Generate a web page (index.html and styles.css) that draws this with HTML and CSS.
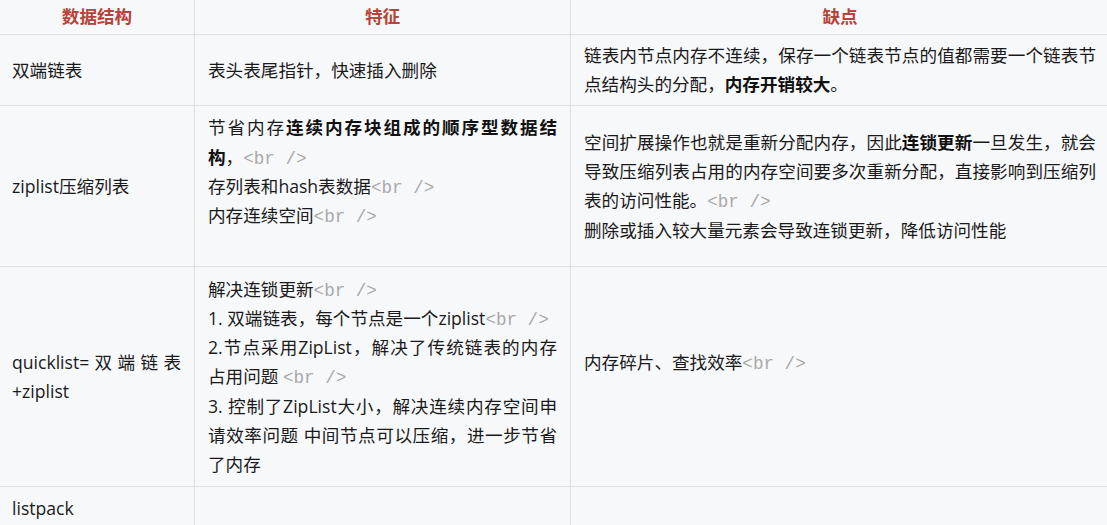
FILE: index.html
```html
<!DOCTYPE html>
<html lang="zh">
<head>
<meta charset="utf-8">
<title>Redis 列表数据结构</title>
<link rel="stylesheet" href="styles.css">
</head>
<body>
<table class="grid">
  <colgroup>
    <col class="c1">
    <col class="c2">
    <col class="c3">
  </colgroup>
  <thead>
    <tr class="head">
      <th>数据结构</th>
      <th>特征</th>
      <th>缺点</th>
    </tr>
  </thead>
  <tbody>
    <tr class="r1">
      <td>双端链表</td>
      <td>表头表尾指针，快速插入删除</td>
      <td>链表内节点内存不连续，保存一个链表节点的值都需要一个链表节点结构头的分配，<b>内存开销较大</b>。</td>
    </tr>
    <tr class="r2">
      <td>ziplist压缩列表</td>
      <td>节省内存<b>连续内存块组成的顺序型数据结构</b>，<span class="raw">&lt;br /&gt;</span><br>存列表和hash表数据<span class="raw">&lt;br /&gt;</span><br>内存连续空间<span class="raw">&lt;br /&gt;</span><br><br></td>
      <td>空间扩展操作也就是重新分配内存，因此<b>连锁更新</b>一旦发生，就会导致压缩列表占用的内存空间要多次重新分配，直接影响到压缩列表的访问性能。<span class="raw">&lt;br /&gt;</span><br>删除或插入较大量元素会导致连锁更新，降低访问性能</td>
    </tr>
    <tr class="r3">
      <td>quicklist=双端链表+ziplist</td>
      <td>解决连锁更新<span class="raw">&lt;br /&gt;</span><br>1. 双端链表，每个节点是一个ziplist<span class="raw">&lt;br /&gt;</span><br>2.节点采用ZipList，解决了传统链表的内存占用问题 <span class="raw">&lt;br /&gt;</span><br>3. 控制了ZipList大小，解决连续内存空间申请效率问题 中间节点可以压缩，进一步节省了内存</td>
      <td>内存碎片、查找效率<span class="raw">&lt;br /&gt;</span><br><br></td>
    </tr>
    <tr class="r4">
      <td>listpack</td>
      <td></td>
      <td></td>
    </tr>
  </tbody>
</table>
</body>
</html>
```

FILE: styles.css
```css
html, body {
  margin: 0;
  padding: 0;
  background: #f7f8fa;
}

body {
  font-family: "Open Sans", "Noto Sans CJK SC", sans-serif;
  font-size: 17.6px;
  line-height: 29.2px;
  color: #1a1a1a;
  overflow: hidden;
}

.grid {
  border-collapse: collapse;
  table-layout: fixed;
  width: 1110px;
  margin-left: -1px;
  margin-top: -1px;
}

.c1 { width: 195px; }
.c2 { width: 376px; }
.c3 { width: 539px; }

.grid th,
.grid td {
  border: 1px solid #dcdfe6;
  padding: 6px 13px;
  vertical-align: middle;
  text-align: justify;
}

.grid td:first-child {
  padding-left: 12px;
}

.grid th {
  text-align: center;
  font-weight: bold;
  color: #b5443a;
  padding-top: 0;
  padding-bottom: 0;
}

.head { height: 35px; }
.r1 { height: 70px; }
.r2 { height: 161px; }
.r3 { height: 220px; }
.r4 { height: 44px; }

.grid b {
  font-weight: bold;
  color: #111;
}

.raw {
  font-family: "Liberation Mono", "DejaVu Sans Mono", monospace;
  color: #a9a9a9;
  line-height: 1;
}
```
